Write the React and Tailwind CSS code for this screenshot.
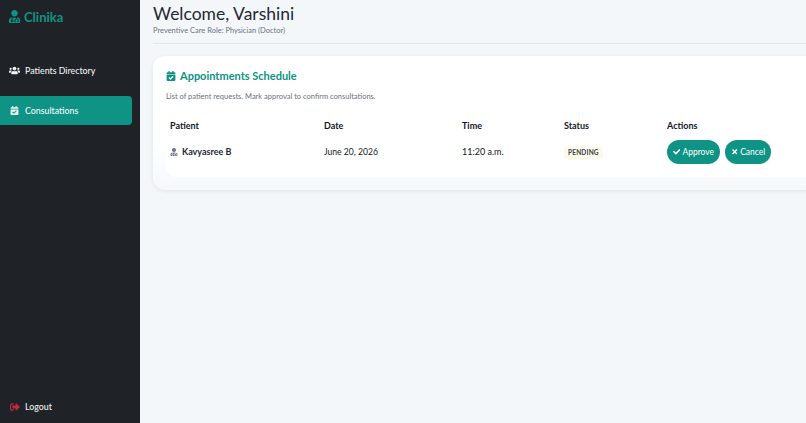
import React from "react";
import { FaUserMd, FaUsers, FaCalendarCheck, FaSignOutAlt, FaCheck, FaTimes } from "react-icons/fa";

const font = "font-['Lato','Noto_Sans',sans-serif]";

function NavItem({ icon, label, active }) {
  return (
    <div className={`flex items-center h-[29px] w-[132px] rounded-r-[4px] pl-[9px] gap-[5px] text-[8.8px] font-medium ${active ? "bg-[#0e9384] text-[#f2faf8]" : "text-[#f0f1f2]"}`}>
      <span className="w-[11px] flex justify-center">{icon}</span>
      <span>{label}</span>
    </div>
  );
}

export default function App() {
  return (
    <div className={`${font} flex h-[423px] w-[806px] overflow-hidden bg-[#f4f7fa]`}>
      <aside className="w-[140px] shrink-0 bg-[#1f2327] flex flex-col">
        <div className="flex items-start gap-[3px] pl-[8px] pt-[9px] h-[34px] text-[#0e9384]">
          <FaUserMd className="text-[13px] mt-[1px]" />
          <span className="text-[13px] leading-[16px] font-bold">Clinika</span>
        </div>
        <nav className="mt-[22px] flex flex-col gap-[11px]">
          <NavItem icon={<FaUsers className="text-[11px]" />} label="Patients Directory" />
          <NavItem active icon={<FaCalendarCheck className="text-[9px]" />} label="Consultations" />
        </nav>
        <div className="mt-auto mb-[2px]">
          <NavItem icon={<FaSignOutAlt className="text-[10px] text-[#c0283f]" />} label="Logout" />
        </div>
      </aside>
      <main className="flex-1 min-w-0 pl-[13px]">
        <header className="h-[44px] border-b border-[#e4e8ec] pt-[2px]">
          <h1 className="text-[17.5px] leading-[24px] text-[#1f2937] font-normal">Welcome, Varshini</h1>
          <p className="text-[7.5px] leading-[10px] text-[#6b7280]">Preventive Care Role: Physician (Doctor)</p>
        </header>
        <section className="mt-[12px] w-[700px] h-[134px] rounded-[12px] bg-gradient-to-b from-white from-65% to-[#f5f8fa] shadow-[0_1px_4px_rgba(0,0,0,0.08)] pl-[13px] pt-[13px]">
          <h2 className="flex items-center gap-[4px] text-[11px] leading-[14px] font-bold text-[#0e9384]">
            <FaCalendarCheck className="text-[10px]" />
            Appointments Schedule
          </h2>
          <p className="mt-[8px] text-[7.5px] leading-[12px] text-[#6b7280]">List of patient requests. Mark approval to confirm consultations.</p>
          <div className="mt-[10px] bg-white rounded-[10px] h-[64px] pl-[4px] text-[9px] text-[#111827]">
            <div className="grid grid-cols-[154px_138px_102px_103px_140px] items-center h-[26px] font-bold">
              <span>Patient</span>
              <span>Date</span>
              <span>Time</span>
              <span>Status</span>
              <span>Actions</span>
            </div>
            <div className="grid grid-cols-[154px_138px_102px_103px_140px] items-center h-[26px]">
              <span className="flex items-center gap-[4px] font-bold text-[#1f2937]">
                <FaUserMd className="text-[8px] text-[#6b7280]" />
                Kavyasree B
              </span>
              <span className="text-[8.6px]">June 20, 2026</span>
              <span>11:20 a.m.</span>
              <span>
                <span className="inline-block px-[4px] py-[1px] rounded-[3px] bg-[#fef9e7] text-[6.5px] font-bold tracking-[0.2px] text-[#374151]">PENDING</span>
              </span>
              <span className="flex items-center gap-[5px]">
                <button className="flex items-center justify-center gap-[2px] w-[53px] h-[24px] rounded-full bg-[#0e9384] text-white text-[8.5px]">
                  <FaCheck className="text-[7.5px]" /> Approve
                </button>
                <button className="flex items-center justify-center gap-[2px] w-[46px] h-[24px] rounded-full bg-[#0e9384] text-white text-[8.5px]">
                  <FaTimes className="text-[7.5px]" /> Cancel
                </button>
              </span>
            </div>
          </div>
        </section>
      </main>
    </div>
  );
}
